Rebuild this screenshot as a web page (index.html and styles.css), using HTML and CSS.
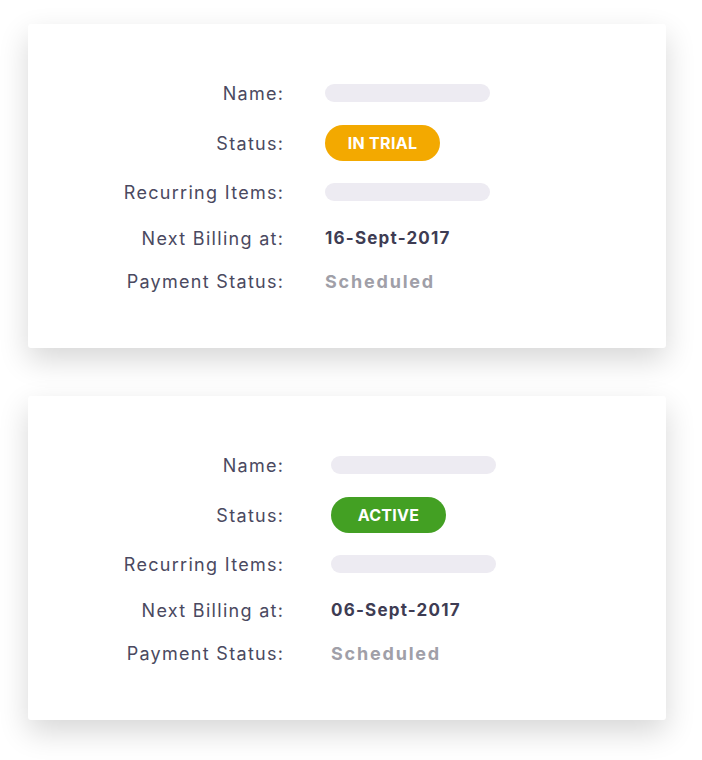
FILE: index.html
```html
<!DOCTYPE html>
<html>
<head>
<meta charset="utf-8">
<link rel="stylesheet" href="styles.css">
</head>
<body>
<div class="page">
  <section class="card">
    <div class="grid">
      <div class="label">Name:</div>
      <div class="value"><span class="bar"></span></div>
      <div class="label">Status:</div>
      <div class="value"><span class="badge trial">IN TRIAL</span></div>
      <div class="label">Recurring Items:</div>
      <div class="value"><span class="bar"></span></div>
      <div class="label">Next Billing at:</div>
      <div class="value"><span class="date">16-Sept-2017</span></div>
      <div class="label">Payment Status:</div>
      <div class="value"><span class="muted">Scheduled</span></div>
    </div>
  </section>
  <section class="card">
    <div class="grid wide">
      <div class="label">Name:</div>
      <div class="value"><span class="bar"></span></div>
      <div class="label">Status:</div>
      <div class="value"><span class="badge active">ACTIVE</span></div>
      <div class="label">Recurring Items:</div>
      <div class="value"><span class="bar"></span></div>
      <div class="label">Next Billing at:</div>
      <div class="value"><span class="date">06-Sept-2017</span></div>
      <div class="label">Payment Status:</div>
      <div class="value"><span class="muted">Scheduled</span></div>
    </div>
  </section>
</div>
</body>
</html>
```
FILE: styles.css
```css
html, body {
  margin: 0;
  padding: 0;
  background: #ffffff;
}
body {
  font-family: Inter, "Liberation Sans", sans-serif;
}
.page {
  display: flex;
  flex-direction: column;
  gap: 48px;
  padding: 24px 36px 40px 28px;
}
.card {
  width: 638px;
  height: 324px;
  box-sizing: border-box;
  background: #ffffff;
  border-radius: 3px;
  box-shadow: 0 12px 30px rgba(0, 0, 0, 0.16);
  padding-top: 44px;
}
.grid {
  display: grid;
  grid-template-columns: 255px 165px;
  grid-template-rows: 50px 50px 48px 44px 42px;
  column-gap: 42px;
}
.grid.wide {
  column-gap: 48px;
}
.label {
  display: flex;
  align-items: center;
  justify-content: flex-end;
  font-size: 18px;
  color: #4a4960;
  letter-spacing: 1.3px;
  margin-right: -1.3px;
}
.value {
  display: flex;
  align-items: center;
}
.bar {
  display: block;
  width: 165px;
  height: 18px;
  border-radius: 9px;
  background: #edebf2;
}
.badge {
  display: flex;
  align-items: center;
  justify-content: center;
  width: 115px;
  height: 36px;
  border-radius: 18px;
  color: #ffffff;
  font-weight: 700;
  font-size: 16px;
  letter-spacing: 0.3px;
}
.trial { background: #f3a900; }
.active { background: #43a023; }
.date {
  font-size: 17px;
  font-weight: 700;
  color: #3e3c53;
  letter-spacing: 1.2px;
}
.muted {
  font-size: 18px;
  font-weight: 700;
  color: #a09fa8;
  letter-spacing: 1.8px;
}
```
